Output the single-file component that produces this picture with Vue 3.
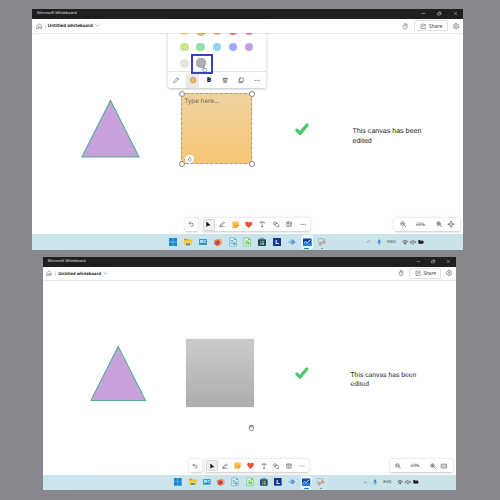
<script setup>
const stroke = (d, w = 1.3, c = '#3b3b3b') =>
  `<path d="${d}" fill="none" stroke="${c}" stroke-width="${w}" stroke-linecap="round" stroke-linejoin="round"/>`

const icons = {
  home: stroke('M2.500 7 8 2l5.500 5V14H10V9.600H6V14H2.500Z', 1.2),
  chevron: stroke('M2.500 5.500l5.500 5L13.500 5.500', 1.2),
  up: stroke('M3.500 10 8 6l4.500 4', 1.5),
  timer: stroke('M6.300 1h3.400M12.300 3.700l1 1M8 6v3', 1.2) + '<circle cx="8" cy="9" r="5.400" fill="none" stroke="#3b3b3b" stroke-width="1.200"/>',
  share: stroke('M7 3H2.500v11h11v-3M6 9.500c.4-3 2-4.300 5-4.300M10 2.300l4.500 3-4.500 3', 1.2),
  gear: '<circle cx="8" cy="8" r="2.300" fill="none" stroke="#3b3b3b" stroke-width="1.200"/>' + stroke('M6.500 1.300h3l.6 2 1.500.8 2-.4 1.300 2.600L13.600 8l1.300 1.700-1.300 2.600-2-.4-1.500.8-.6 2h-3l-.6-2-1.500-.8-2 .4L1.100 9.700 2.400 8 1.100 6.300 2.400 3.700l2 .4 1.500-.8Z', 1.2),
  min: stroke('M3 8h10', 1.5, '#ddd'),
  max: stroke('M3 6h7v7H3ZM6 5.500V3h7v7h-2.500', 1.4, '#ddd'),
  close: stroke('M3.500 3.500l9 9M12.500 3.500l-9 9', 1.4, '#ddd'),
  undo: stroke('M5.500 2.500 2.500 5.500l3 3M2.800 5.500h7c5 0 4.600 7.500 0 7.500H8', 1.4),
  pointer: '<path d="M3.500 1v14l3.900-3.700 7-.3Z" fill="#000"/>',
  pen: stroke('M3 12l1-3.500L11.500 2l2.500 2.500L6.500 11ZM2 14.300h8c2 0 2-1.500 3.500-1.500', 1.3),
  note: '<path d="M1 1.500h14v8.500l-5 5H1Z" fill="#f9b53c"/><path d="M1 1.500h14v4H1Z" fill="#fcc75c"/><path d="M15 10h-5v5Z" fill="#e97f3c"/>',
  heart: '<path d="M8 15C3 11-.5 8.500.5 4.600 1.500 1.200 6 .5 8 4c2-3.500 6.500-2.800 7.500.6C16.500 8.500 13 11 8 15Z" fill="#ee5138"/>',
  text: stroke('M3 4.800V2.500h10v2.300M8 2.500v11.500M6.300 14h3.400', 1.3),
  shapes: stroke('M4.500 10A4.200 4.200 0 1 1 10 5.500M6.500 6.500h5l3 3v5h-5l-3-3Z', 1.3),
  frame: stroke('M2.500 2.500h11v11h-11ZM2.500 5.500h11M5.500 2.500v11M10 8v4', 1.1),
  more: '<g fill="#333"><circle cx="3" cy="8" r="1.300"/><circle cx="8" cy="8" r="1.300"/><circle cx="13" cy="8" r="1.300"/></g>',
  zoomout: '<circle cx="6.500" cy="6.500" r="4.500" fill="none" stroke="#333" stroke-width="1.400"/>' + stroke('M9.900 9.900l4.300 4.300M4.600 6.500h3.800', 1.5),
  zoomin: '<circle cx="6.500" cy="6.500" r="4.500" fill="none" stroke="#333" stroke-width="1.400"/>' + stroke('M9.900 9.900l4.300 4.300M4.500 6.500h4M6.500 4.500v4', 1.4),
  fit: stroke('M5 5h6v6H5ZM6.300 2 8 .3 9.700 2M6.300 14 8 15.700 9.700 14M2 6.300.3 8 2 9.700M14 6.300 15.700 8 14 9.700M8 .5V5M8 11v4.500M.5 8H5M11 8h4.500', 1.1),
  fitwide: stroke('M1.500 3h13v10h-13ZM6 6.300 4 8l2 1.700M10 6.300 12 8l-2 1.700', 1.4),
  pencil: stroke('M2 14l1-4 8-8 3 3-8 8ZM9.500 3.500l3 3', 1.2),
  swatch: '<circle cx="8" cy="8" r="6.500" fill="#f5c263" stroke="#a97b35" stroke-width="1.700"/>',
  trash: stroke('M2 4h12M6 3.500c0-2 4-2 4 0M3.500 4l1 10h7l1-10M6.500 7v4.500M9.500 7v4.500', 1.3),
  copy: stroke('M5.500 2h7.500v10H5.500ZM5 4.500H3v10h7.500V12.500', 1.3),
  thumb: stroke('M4.500 8 8 4l1-2.500c2 0 1.600 2.500 1 4.500h2.500c2 0 .5 7-1 7.500H6c-1.500-1.500-3-2.500-1.500-5.500Z', 1.3),
  hand: '<path d="M6 14.500 2.500 9.500c-.8-1.600 1-2 1.800-.8l1 1V2.500c0-1.500 1.900-1.500 1.900 0V7c0-1.300 1.900-1.200 1.900 0 0-1 1.800-.9 1.900.3 0-1 1.800-.8 1.800.5v3.500L12 14.500Z" fill="#fff" stroke="#333" stroke-width="1"/>',
  grab: '<path d="M5 14.500 2.300 9.500c-.5-1.500 0-2 1.700-1.500V4.500C4 3 5.800 3 6 4.200 6 2.500 8 2.500 8.200 4c.3-1.500 2-1.200 2.200.2 1-.9 2.300-.2 2.300 1.200v5L11.500 14.500Z" fill="#fff" stroke="#333" stroke-width="1.200"/>' + stroke('M6 4.500v2.500M8.200 4.500V7M10.400 4.500V7', 1),
  mic: '<rect x="5.300" y="1" width="5.400" height="9" rx="2.700" fill="#3b86cc"/>' + stroke('M3.300 8c0 6 9.400 6 9.400 0M8 12.500V15', 1.3, '#3b86cc'),
  wifi: stroke('M1.500 6.500c4-3.700 9-3.700 13 0M3.800 9c2.700-2.500 5.700-2.500 8.400 0', 1.6) + '<path d="M5.500 11c1.800-1.500 3.200-1.500 5 0L8 13.800Z" fill="#222"/>',
  sound: stroke('M1.500 6h2.500l4-3.500v11L4 10H1.500ZM11 6l3.500 4M14.500 6l-3.500 4', 1.3),
  battery: '<path d="M1 4h12v8H1Z" fill="#222"/><path d="M13 6.500h2v3h-2ZM1 2.500h4V7H1Z" fill="#222"/>',
  windows: '<path d="M0 0h7.600v7.600H0ZM8.400 0H16v7.600H8.400ZM0 8.400h7.600V16H0ZM8.400 8.400H16V16H8.400Z" fill="#1685d3"/>',
  folder: '<path d="M0 1.500h6l2 2h7.500V8H0Z" fill="#dc9a18"/><path d="M0 4.500h16v10H0Z" fill="#fbcb43"/><path d="M4 11h8v3.500H4Z" fill="#2f82cb"/>',
  card: '<rect y="2" width="16" height="12" rx="1" fill="#389bd1"/><path d="M2 4h7v6H2Z" fill="#a8e0f4"/><path d="M10.500 4.500H14v2h-3.500ZM10.500 8H14v1.500h-3.500Z" fill="#d8f1f8"/><path d="M4 11h7v1H4Z" fill="#176b9e"/>',
  firefox: '<path d="M2 3l2 1.500 3-3 1 2 4-1.500c4 3 5 8 2 11.500-3 3-9 3-12 0C-.5 10 0 6 2 3Z" fill="#f36a2a"/><path d="M9 1c5 1 8 7 5 11-1 2-3 3-5 3 5-4 4-8 0-14Z" fill="#fcb62f"/><circle cx="7.500" cy="9" r="3.200" fill="#6b46c4"/><path d="M1 6c0 5 3 7 7 7l-1 2C2 14 0 11 1 6Z" fill="#e33457"/>',
  writer: '<path d="M1.500 0h9.500l4 4v12H1.500Z" fill="#e7f5fb" stroke="#4b9fc2" stroke-width="1.200"/><path d="M11 0v4h4Z" fill="#2f8fb8"/>' + stroke('M4.500 5H8M4.500 8h8M4.500 11h3', 1.3, '#3089b7') + '<path d="M9 10h4v3.500H9Z" fill="#3089b7"/>',
  calc: '<path d="M1.500 0h9.500l4 4v12H1.500Z" fill="#eaf9e7" stroke="#5cbc58" stroke-width="1.200"/><path d="M11 0v4h4Z" fill="#43a642"/>' + stroke('M4.500 6h8M4.500 9h8M4.500 12h4M7.500 6v6', 1.1, '#4db64a') + '<path d="M9.500 9h3v4h-3Z" fill="#4db64a"/>',
  store: '<rect y="2.500" width="16" height="13.500" rx="1.500" fill="#174d70"/><path d="M5 3V.8h6V3" fill="none" stroke="#206595" stroke-width="1.300"/><path d="M4 5.500h3.600v3.600H4Z" fill="#e65a36"/><path d="M8.400 5.500H12v3.600H8.400Z" fill="#83bb38"/><path d="M4 9.900h3.600v3.600H4Z" fill="#38a9e4"/><path d="M8.400 9.900H12v3.600H8.400Z" fill="#f7bd36"/>',
  lbox: '<rect width="16" height="16" fill="#18368f"/><text x="8.200" y="12.500" text-anchor="middle" font-size="12" font-weight="700" font-family="Liberation Sans, sans-serif" fill="#fff">L</text>',
  audio: '<path d="M1 6.500h2v3H1ZM3.700 5h1.800v6H3.700ZM6.200 3h1.800v10H6.200Z" fill="#6aa9d8"/><path d="M8.700 2.500 15.500 8l-6.800 5.500Z" fill="#3f7fbd"/><path d="M11.500 5.500h2v5h-2Z" fill="#c3a3bd"/>',
  board: '<rect y="1" width="16" height="14" rx="1" fill="#0c47a8"/><path d="M0 9.500h16V14q0 1-1 1H1q-1 0-1-1Z" fill="#2583e7"/>' + stroke('M3 8.500c2-5 4 2.500 6 0l4-4.500', 1.8, '#fff'),
  snip: stroke('M5 1l5 9M12 3 5 11', 1.4, '#8297a4') + '<path d="M1 1h9v8H1Z" fill="#d6e2e7" stroke="#869daa"/><circle cx="5" cy="12.500" r="2.200" fill="none" stroke="#e06a43" stroke-width="1.600"/><circle cx="12.500" cy="8.500" r="2.200" fill="none" stroke="#e06a43" stroke-width="1.600"/>',
  check: stroke('M2.200 9.500 5.800 13 13.800 3.500', 3.9, '#4bc971')
}

const tools = ['pointer', 'pen', 'note', 'heart', 'text', 'shapes', 'frame', 'more']
const apps = ['windows', 'folder', 'card', 'firefox', 'writer', 'calc', 'store', 'lbox', 'audio', 'board', 'snip']
const noteTools = ['pencil', 'swatch', 'bold', 'trash', 'copy', 'more']
const swatches = [
  '#f3db91', '#f4c26c', '#f4b18e', '#ec7580', '#e487bc',
  '#c9e58e', '#8fddb3', '#90d5ed', '#9badfa', '#c69fdd',
  '#e5e5e5', '#b0b0b0'
]
const windows = [
  { id: 'first', editing: true, fit: 'fit' },
  { id: 'second', editing: false, fit: 'fitwide' }
]
</script>

<template>
  <main class="page">
    <section v-for="w in windows" :key="w.id" class="window" :class="w.id">
      <div class="titlebar">
        <span class="app-name">Microsoft Whiteboard</span>
        <div class="controls">
          <svg v-for="c in ['min', 'max', 'close']" :key="c" viewBox="0 0 16 16" class="ic" v-html="icons[c]"></svg>
        </div>
      </div>
      <header class="header">
        <svg viewBox="0 0 16 16" class="ic home" v-html="icons.home"></svg>
        <i class="divider"></i>
        <span class="board-name">Untitled whiteboard</span>
        <svg viewBox="0 0 16 16" class="ic chev" v-html="icons.chevron"></svg>
        <svg viewBox="0 0 16 16" class="ic timer" v-html="icons.timer"></svg>
        <button class="share">
          <svg viewBox="0 0 16 16" class="ic" v-html="icons.share"></svg><span>Share</span>
        </button>
        <svg viewBox="0 0 16 16" class="ic gear" v-html="icons.gear"></svg>
      </header>
      <div class="canvas">
        <svg class="triangle" viewBox="0 0 60 60">
          <path d="M30 1.500 59 59H1Z" fill="#c8a2dc" stroke="#4fae8b" stroke-width="1.100" />
        </svg>
        <div class="sticky" :class="{ editing: w.editing }">
          <template v-if="w.editing">
            <span class="placeholder">Type here...</span>
            <span class="react"><svg viewBox="0 0 16 16" class="ic" v-html="icons.thumb"></svg></span>
            <i v-for="n in 4" :key="n" class="handle" :class="'h' + n"></i>
          </template>
        </div>
        <svg class="check" viewBox="0 0 16 16" v-html="icons.check"></svg>
        <p class="message">This canvas has been<br />edited</p>
        <svg v-if="!w.editing" class="grab" viewBox="0 0 16 16" v-html="icons.grab"></svg>
        <div v-if="w.editing" class="popup">
          <div class="palette">
            <i v-for="(c, i) in swatches" :key="c" class="dot" :class="{ current: i === 1 }" :style="{ background: c }"></i>
          </div>
          <div class="note-tools">
            <span v-for="t in noteTools" :key="t" class="note-tool" :class="{ active: t === 'swatch' }">
              <b v-if="t === 'bold'">B</b>
              <svg v-else viewBox="0 0 16 16" class="ic" v-html="icons[t]"></svg>
            </span>
          </div>
          <div class="highlight"></div>
          <svg class="hand" viewBox="0 0 16 16" v-html="icons.hand"></svg>
        </div>
        <div class="dock">
          <div class="panel undo"><svg viewBox="0 0 16 16" class="ic" v-html="icons.undo"></svg></div>
          <div class="panel tools">
            <span v-for="t in tools" :key="t" class="tool" :class="[t, { active: t === 'pointer' }]">
              <svg viewBox="0 0 16 16" class="ic" v-html="icons[t]"></svg>
            </span>
          </div>
          <div class="panel zoom">
            <svg viewBox="0 0 16 16" class="ic" v-html="icons.zoomout"></svg>
            <span>69%</span>
            <svg viewBox="0 0 16 16" class="ic" v-html="icons.zoomin"></svg>
            <svg viewBox="0 0 16 16" class="ic" v-html="icons[w.fit]"></svg>
          </div>
        </div>
      </div>
      <footer class="taskbar">
        <div class="apps">
          <span v-for="a in apps" :key="a" class="app" :class="a">
            <svg viewBox="0 0 16 16" v-html="icons[a]"></svg>
          </span>
        </div>
        <div class="tray">
          <svg viewBox="0 0 16 16" class="ic t-up" v-html="icons.up"></svg>
          <svg viewBox="0 0 16 16" class="ic t-mic" v-html="icons.mic"></svg>
          <span class="lang">ENG</span>
          <svg viewBox="0 0 16 16" class="ic" v-html="icons.wifi"></svg>
          <svg viewBox="0 0 16 16" class="ic" v-html="icons.sound"></svg>
          <svg viewBox="0 0 16 16" class="ic" v-html="icons.battery"></svg>
        </div>
      </footer>
    </section>
  </main>
</template>

<style>
body { margin: 0; background: #87878d; }
</style>

<style scoped>
* { box-sizing: border-box; }
.page {
  width: 500px; height: 500px; padding-top: 8.5px; overflow: hidden;
  background: #87878d; display: flex; flex-direction: column; gap: 7px;
  font-family: "Open Sans", "Noto Sans", sans-serif; color: #333;
  text-rendering: geometricPrecision;
}
.window { width: calc(var(--u) * 431); display: flex; flex-direction: column; flex: none; overflow: hidden; background: #fff; }
.first { --u: 1px; height: 241.5px; margin-left: 32px; }
.second { --u: 0.958px; height: 233px; margin-left: 43px; }
svg { display: block; overflow: visible; flex: none; }
.ic { width: calc(var(--u) * 6.400); height: calc(var(--u) * 6.400); }

.titlebar {
  height: calc(var(--u) * 10.3); flex: none; background: #1f1f1f; color: #e6e6e6;
  display: flex; align-items: center; justify-content: space-between;
  padding: 0 calc(var(--u) * 5.500) calc(var(--u) * 0.800) calc(var(--u) * 5);
}
.app-name { font-size: calc(var(--u) * 3.900); line-height: 1; padding-top: 1.400px; white-space: nowrap; }
.second .app-name { padding-top: 0.800px; }
.controls { display: flex; gap: calc(var(--u) * 10.600); }
.controls .ic { width: calc(var(--u) * 5); height: calc(var(--u) * 5); }

.header {
  height: calc(var(--u) * 13.800); flex: none; background: #fff; position: relative; z-index: 3;
  display: flex; align-items: center; box-shadow: 0 0.500px 1.500px rgba(0, 0, 0, 0.22);
  padding: 0 calc(var(--u) * 3.800) 0 calc(var(--u) * 3.600);
}
.divider { width: 0.500px; height: calc(var(--u) * 6); margin: 0 calc(var(--u) * 2.300) 0 calc(var(--u) * 3); background: #ddd; }
.board-name { width: calc(var(--u) * 45); padding-top: 1px; font-size: calc(var(--u) * 4.450); font-weight: 700; line-height: 1; color: #222; white-space: nowrap; }
.chev { width: calc(var(--u) * 5); height: calc(var(--u) * 5); margin-left: calc(var(--u) * 2); }
.timer { margin-left: auto; margin-right: calc(var(--u) * 5.600); }
.share {
  width: calc(var(--u) * 33.500); height: calc(var(--u) * 10.800); padding: 0; background: #fff;
  border: 1px solid #e3e3e3; border-radius: 1.500px; font: inherit; color: #333;
  font-size: calc(var(--u) * 4.900); line-height: 1; display: flex; align-items: center; justify-content: center;
  gap: calc(var(--u) * 2.800);
}
.first .share span { padding-top: 0.800px; }
.gear { margin-left: calc(var(--u) * 5); }

.canvas { flex: 1; position: relative; background: #fff; display: flex; align-items: flex-end; }
.triangle { position: absolute; width: 59px; height: 59px; left: 49px; top: 66.700px; }
.second .triangle { width: 56.500px; height: 56.500px; left: 47px; top: 64.900px; }
.sticky { position: absolute; left: 143px; top: 58.500px; width: 68px; height: 68px; background: linear-gradient(#cbcbcb, #adadad); box-shadow: 0 0 1px rgba(0, 0, 0, 0.2); }
.sticky.editing { left: 149.300px; top: 60.600px; width: 71px; height: 71px; background: linear-gradient(#f0d29e, #f5c674); border: 1px dashed #aaa08f; }
.placeholder { position: absolute; left: 2.300px; top: 2px; font-size: 6.400px; line-height: 10px; color: #655c4e; white-space: nowrap; }
.react { position: absolute; left: 3px; bottom: 0; width: 9px; height: 8px; border-radius: 4px; background: #fff; display: flex; align-items: center; justify-content: center; }
.react .ic { width: 5px; height: 5px; }
.handle { position: absolute; width: 6px; height: 6px; border-radius: 50%; background: #fff; border: 1px solid #888; }
.h1 { left: -3.400px; top: -3.400px; }
.h2 { right: -3.400px; top: -3.400px; }
.h3 { left: -3.400px; bottom: -3.400px; }
.h4 { right: -3.400px; bottom: -3.400px; }
.check { position: absolute; width: 14px; height: 14px; left: 262.600px; top: 89.300px; }
.second .check { width: 13.600px; height: 13.600px; left: 251.700px; top: 85.800px; }
.message { position: absolute; margin: 0; left: 320.500px; top: 93.200px; font-family: "Liberation Sans", sans-serif; font-size: 7.080px; line-height: 10px; color: #262626; white-space: nowrap; }
.second .message { left: 307.500px; top: 90.500px; font-size: 6.750px; line-height: 9.300px; }
.grab { position: absolute; width: 7px; height: 7px; left: 204.500px; top: 144px; }

.popup { position: absolute; z-index: 2; left: 136px; top: -12px; width: 97.700px; height: 67.500px; background: #fff; border-radius: 2px; box-shadow: 0 0.500px 3px rgba(0, 0, 0, 0.25); display: flex; flex-direction: column; }
.palette { flex: 1; display: grid; grid-template-columns: repeat(5, 16.100px); grid-auto-rows: 16.200px; place-items: center; padding: 2.200px 8.600px 0; border-bottom: 1px solid #e4e4e4; align-content: start; }
.dot { width: 8.600px; height: 8.600px; border-radius: 50%; }
.dot.current { width: 10.400px; height: 10.400px; border: 1px solid #c9ab7a; }
.dot:last-child { width: 9.800px; height: 9.800px; box-shadow: inset 0 0 0 0.600px #a2a2a2; }
.note-tools { height: 16.300px; flex: none; display: flex; padding-left: 0.500px; }
.note-tool { width: 16.200px; height: 16.300px; flex: none; display: flex; align-items: center; justify-content: center; font-size: 6.500px; line-height: 1; color: #111; }
.note-tool b { font-weight: 800; }
.active { background: #ece9e5; }
.note-tool.active { width: 13.200px; height: 14px; margin: 1.200px 1.500px; }
.highlight { position: absolute; left: 22.800px; top: 33.800px; width: 22px; height: 19.500px; border: 2px solid #3543c7; }
.hand { position: absolute; left: 32.500px; top: 44.500px; width: 7px; height: 8px; }

.dock { position: relative; width: 100%; display: flex; padding: 0 calc(var(--u) * 3.300) calc(var(--u) * 2.800) calc(var(--u) * 152.500); }
.panel { height: calc(var(--u) * 13.700); background: #fff; border-radius: 2px; box-shadow: 0 0.500px 2.500px rgba(0, 0, 0, 0.22); display: flex; align-items: center; }
.undo { width: calc(var(--u) * 13.500); justify-content: center; margin-right: calc(var(--u) * 3.500); }
.tools { width: calc(var(--u) * 108.500); padding-left: calc(var(--u) * 0.300); }
.tool { width: calc(var(--u) * 13.470); display: flex; align-items: center; justify-content: center; }
.tool.active { width: calc(var(--u) * 12); height: calc(var(--u) * 12); margin: 0 calc(var(--u) * 0.735); background: #f0f0f0; border: 1px solid #d6d6d6; border-radius: 1.500px; }
.tool.note .ic, .tool.heart .ic { width: calc(var(--u) * 7.400); height: calc(var(--u) * 7.400); }
.zoom { margin-left: auto; width: calc(var(--u) * 65.700); font-size: calc(var(--u) * 4.700); line-height: 1; padding-left: calc(var(--u) * 5.800); }
.zoom span { width: calc(var(--u) * 12); padding-top: 1px; text-align: center; margin: 0 calc(var(--u) * 9) 0 calc(var(--u) * 8.300); }
.zoom .ic:last-child { margin-left: calc(var(--u) * 5.800); }

.taskbar { height: calc(var(--u) * 15.800); flex: none; background: linear-gradient(90deg, #cde5ee, #c9e3e9); display: flex; align-items: center; padding: 0 0 calc(var(--u) * 0.600) calc(var(--u) * 133.600); }
.apps { display: flex; height: 100%; align-items: center; }
.app { position: relative; width: calc(var(--u) * 14.880); height: 100%; display: flex; align-items: center; justify-content: center; }
.app svg { width: calc(var(--u) * 8); height: calc(var(--u) * 8); position: relative; }
.app.board svg { width: calc(var(--u) * 8.600); height: calc(var(--u) * 8.600); }
.app.board::before { content: ""; position: absolute; inset: 1px 1.500px 0; background: #edf7fa; border-radius: 1.500px; }
.app.board::after { content: ""; position: absolute; bottom: 0; width: 5px; height: 1px; border-radius: 1px; background: #2578bc; }
.app.snip::after { content: ""; position: absolute; bottom: 0; width: 2px; height: 1px; border-radius: 1px; background: #82939a; }
.tray { display: flex; align-items: center; margin-left: calc(var(--u) * 36.800); font-size: calc(var(--u) * 4.200); line-height: 1; }
.tray .ic { margin-right: calc(var(--u) * 1.900); }
.tray .t-up { width: calc(var(--u) * 5); height: calc(var(--u) * 5); margin-right: calc(var(--u) * 4.800); }
.tray .t-mic { margin-right: calc(var(--u) * 5); }
.lang { width: calc(var(--u) * 11); padding-top: 1.800px; margin-right: calc(var(--u) * 3.300); }
</style>
